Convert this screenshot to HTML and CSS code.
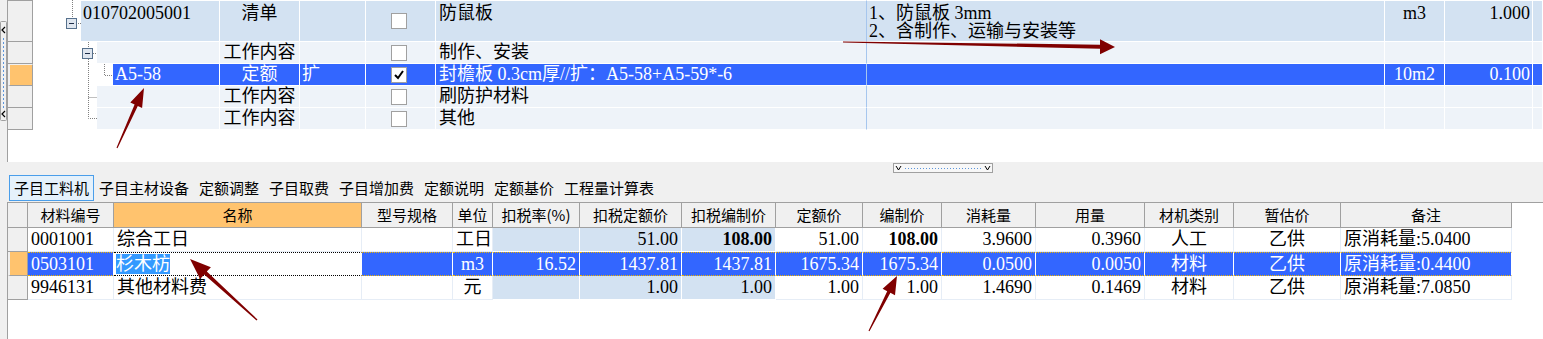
FILE: index.html
```html
<!DOCTYPE html>
<html lang="zh">
<head>
<meta charset="utf-8">
<title>子目工料机</title>
<link rel="stylesheet" href="styles.css">
</head>
<body>
<div class="app">
  <div class="lstrip">
    <svg class="vsplit" width="7" height="100" viewBox="0 0 7 100">
      <rect x="0.5" y="0.5" width="6" height="99" rx="1" fill="#f0f0f0" stroke="#a0a0a0"/>
      <path d="M5 6L2 9L5 12" fill="none" stroke="#000" stroke-width="1.2"/>
      <path d="M3.5 17V87" stroke="#5b95dc" stroke-dasharray="2 2"/>
      <path d="M5 90L2 93L5 96" fill="none" stroke="#000" stroke-width="1.2"/>
    </svg>
  </div>
  <div class="main">
    <div class="top">
      <div class="trow r1">
        <div class="rh"></div>
        <div class="code">
          <svg class="ind" width="48" height="42" viewBox="0 0 48 42">
            <path class="dl" d="M39.5 0V18M45 23.5H48"/>
            <rect x="33.5" y="18.5" width="10" height="10" fill="#dfe6ef" stroke="#56708c"/>
            <path d="M36 23.5H41" stroke="#1c2c48"/>
          </svg>
          <div class="tc grow">010702005001</div>
        </div>
        <div class="tc ctr">清单</div>
        <div class="tc"></div>
        <div class="tc chk"><span class="cb"></span></div>
        <div class="tc desc">防鼠板</div>
        <div class="tc">1、防鼠板 3mm<br>2、含制作、运输与安装等</div>
        <div class="tc ctr">m3</div>
        <div class="tc num">1.000</div>
        <div class="tc"></div>
      </div>
      <div class="trow rl">
        <div class="rh"></div>
        <div class="code">
          <svg class="ind" width="64" height="22" viewBox="0 0 64 22">
            <path class="dl" d="M55.5 0V6M55.5 17V22M60 11.5H64"/>
            <rect x="49.5" y="6.5" width="10" height="10" fill="#dfe6ef" stroke="#56708c"/>
            <path d="M52 11.5H57" stroke="#1c2c48"/>
          </svg>
          <div class="tc grow"></div>
        </div>
        <div class="tc ctr">工作内容</div>
        <div class="tc"></div>
        <div class="tc chk"><span class="cb"></span></div>
        <div class="tc desc">制作、安装</div>
        <div class="tc"></div>
        <div class="tc"></div>
        <div class="tc"></div>
        <div class="tc"></div>
      </div>
      <div class="trow rs">
        <div class="rh on"></div>
        <div class="code">
          <svg class="ind" width="80" height="22" viewBox="0 0 80 22">
            <path class="dl" d="M55.5 0V22M71.5 0V11.5H80"/>
          </svg>
          <div class="tc grow">A5-58</div>
        </div>
        <div class="tc ctr">定额</div>
        <div class="tc">扩</div>
        <div class="tc chk"><span class="cb"><svg width="14" height="14" viewBox="0 0 14 14"><path d="M3 7L6 10L11 3" fill="none" stroke="#000" stroke-width="2"/></svg></span></div>
        <div class="tc desc">封檐板 0.3cm厚//扩：A5-58+A5-59*-6</div>
        <div class="tc"></div>
        <div class="tc ctr">10m2</div>
        <div class="tc num">0.100</div>
        <div class="tc"></div>
      </div>
      <div class="trow rl">
        <div class="rh"></div>
        <div class="code">
          <svg class="ind" width="64" height="22" viewBox="0 0 64 22">
            <path class="dl" d="M55.5 0V22M55.5 11.5H64"/>
          </svg>
          <div class="tc grow"></div>
        </div>
        <div class="tc ctr">工作内容</div>
        <div class="tc"></div>
        <div class="tc chk"><span class="cb"></span></div>
        <div class="tc desc">刷防护材料</div>
        <div class="tc"></div>
        <div class="tc"></div>
        <div class="tc"></div>
        <div class="tc"></div>
      </div>
      <div class="trow rl">
        <div class="rh"></div>
        <div class="code">
          <svg class="ind" width="64" height="22" viewBox="0 0 64 22">
            <path class="dl" d="M55.5 0V10.5H64"/>
          </svg>
          <div class="tc grow"></div>
        </div>
        <div class="tc ctr">工作内容</div>
        <div class="tc"></div>
        <div class="tc chk"><span class="cb"></span></div>
        <div class="tc desc">其他</div>
        <div class="tc"></div>
        <div class="tc"></div>
        <div class="tc"></div>
        <div class="tc"></div>
      </div>
    </div>

    <div class="split">
      <svg class="handle" width="100" height="10" viewBox="0 0 100 10">
        <rect x="0.5" y="0.5" width="99" height="9" fill="#f7f7f7" stroke="#a0a0a0"/>
        <path d="M3 3L5.5 7L8 3M92 3L94.5 7L97 3" fill="none" stroke="#000"/>
        <path d="M12 5.5H88" stroke="#5b95dc" stroke-dasharray="1 2"/>
      </svg>
    </div>

    <div class="tabs">
      <div class="tab on">子目工料机</div>
      <div class="tab">子目主材设备</div>
      <div class="tab">定额调整</div>
      <div class="tab">子目取费</div>
      <div class="tab">子目增加费</div>
      <div class="tab">定额说明</div>
      <div class="tab">定额基价</div>
      <div class="tab">工程量计算表</div>
    </div>

    <div class="low">
      <div class="lrow lhead">
        <div class="hc"></div>
        <div class="hc">材料编号</div>
        <div class="hc hsel">名称</div>
        <div class="hc">型号规格</div>
        <div class="hc">单位</div>
        <div class="hc">扣税率(%)</div>
        <div class="hc">扣税定额价</div>
        <div class="hc">扣税编制价</div>
        <div class="hc">定额价</div>
        <div class="hc">编制价</div>
        <div class="hc">消耗量</div>
        <div class="hc">用量</div>
        <div class="hc">材机类别</div>
        <div class="hc">暂估价</div>
        <div class="hc">备注</div>
      </div>
      <div class="lrow">
        <div class="lrh"></div>
        <div class="lc">0001001</div>
        <div class="lc">综合工日</div>
        <div class="lc"></div>
        <div class="lc c">工日</div>
        <div class="lc lb"></div>
        <div class="lc lb n">51.00</div>
        <div class="lc lb n b">108.00</div>
        <div class="lc n">51.00</div>
        <div class="lc n b">108.00</div>
        <div class="lc n">3.9600</div>
        <div class="lc n">0.3960</div>
        <div class="lc c">人工</div>
        <div class="lc c">乙供</div>
        <div class="lc">原消耗量:5.0400</div>
      </div>
      <div class="lrow sel">
        <div class="lrh on"></div>
        <div class="lc">0503101</div>
        <div class="lc edit"><span class="hl">杉木枋</span></div>
        <div class="lc"></div>
        <div class="lc c">m3</div>
        <div class="lc lb n">16.52</div>
        <div class="lc lb n">1437.81</div>
        <div class="lc lb n">1437.81</div>
        <div class="lc n">1675.34</div>
        <div class="lc n">1675.34</div>
        <div class="lc n">0.0500</div>
        <div class="lc n">0.0050</div>
        <div class="lc c">材料</div>
        <div class="lc c">乙供</div>
        <div class="lc">原消耗量:0.4400</div>
      </div>
      <div class="lrow">
        <div class="lrh"></div>
        <div class="lc">9946131</div>
        <div class="lc">其他材料费</div>
        <div class="lc"></div>
        <div class="lc c">元</div>
        <div class="lc lb"></div>
        <div class="lc lb n">1.00</div>
        <div class="lc lb n">1.00</div>
        <div class="lc n">1.00</div>
        <div class="lc n">1.00</div>
        <div class="lc n">1.4690</div>
        <div class="lc n">0.1469</div>
        <div class="lc c">材料</div>
        <div class="lc c">乙供</div>
        <div class="lc">原消耗量:7.0850</div>
      </div>
    </div>
  </div>
</div>

<svg class="anno" width="1543" height="339" viewBox="0 0 1543 339">
  <polygon points="116.5,147.8 134.6,104.6 130.3,102.6 144,88 142.1,108 137.8,106 117.5,148.2"/>
  <polygon points="843,41.4 1100,44.7 1100,39.2 1115,47 1100,54.2 1100,48.7 843,42.6"/>
  <polygon points="256.5,320.5 204.2,274.6 200.1,279 190,259 210.9,267.2 206.8,271.6 257.5,319.5"/>
  <polygon points="868.5,330.7 887.2,291.2 882.6,288.8 897,276 895,295.2 890.4,292.8 869.5,331.3"/>
</svg>
</body>
</html>
```

FILE: styles.css
```css
html, body {
  margin: 0;
  padding: 0;
}

body {
  width: 1543px;
  height: 339px;
  overflow: hidden;
  background: #f0f0f0;
  position: relative;
  color: #000;
  font-family: "Liberation Serif", "Noto Sans CJK SC", serif;
  font-size: 18px;
}

.app {
  display: flex;
  height: 339px;
}

.lstrip {
  width: 7px;
  flex: none;
  padding-top: 21px;
  box-sizing: border-box;
  background: #f0f0f0;
}

.vsplit {
  display: block;
}

.main {
  flex: 1;
  min-width: 0;
  display: flex;
  flex-direction: column;
}

/* ---------- top tree grid ---------- */
.top {
  height: 162px;
  flex: none;
  background: #fff;
  border-left: 1px solid #a0a0a0;
  box-sizing: border-box;
}

.trow {
  display: grid;
  grid-template-columns: 25px 187px 80px 66px 70px 431px 518px 60px 88px 1fr;
  height: 22px;
}

.trow.r1 {
  height: 42px;
}

.rh {
  background: #f0f0f0;
  border-right: 1px solid #a0a0a0;
  border-bottom: 1px solid #a0a0a0;
  box-sizing: border-box;
}

.r1 .rh {
  border-top: 1px solid #a0a0a0;
}

.rh.on {
  background: #ffc36e;
  border-left: 2px solid #f0f0f0;
  border-top: 1px solid #f0f0f0;
}

.code {
  display: flex;
  min-width: 0;
}

.ind {
  flex: none;
  display: block;
}

.dl {
  fill: none;
  stroke: #808080;
  stroke-dasharray: 1 1;
}

.tc {
  box-sizing: border-box;
  border-right: 1px solid #fff;
  border-bottom: 1px solid #fff;
  padding: 0 2px;
  line-height: 21px;
  white-space: nowrap;
  overflow: hidden;
  min-width: 0;
}

.grow {
  flex: 1;
}

.r1 .tc {
  background: #d3e2f2;
  border-top: 1px solid #fff;
  line-height: 18px;
  padding-top: 3px;
}

.rl .tc {
  background: #eef3f9;
}

.rs .tc {
  background: #3366ff;
  color: #fff;
}

.tc.desc {
  padding-left: 3px;
  border-right-color: #a6c6ee;
}

.ctr {
  text-align: center;
}

.num {
  text-align: right;
}

.tc.chk {
  display: flex;
  align-items: center;
  justify-content: center;
  padding: 0 4px 0 0;
}

.r1 .tc.chk {
  padding-top: 0;
}

.cb {
  width: 16px;
  height: 16px;
  box-sizing: border-box;
  border: 1px solid #a0a0a0;
  background: #fff;
  display: flex;
  align-items: center;
  justify-content: center;
}

.cb svg {
  display: block;
}

/* ---------- splitter / tabs ---------- */
.split {
  height: 13px;
  flex: none;
}

.handle {
  display: block;
  margin: 1px 0 0 886px;
}

.tabs {
  display: flex;
  height: 26px;
  flex: none;
  padding-left: 2px;
  margin-bottom: 1px;
}

.tab {
  box-sizing: border-box;
  height: 26px;
  padding: 0 4px;
  border: 1px solid transparent;
  font-family: "Noto Sans CJK SC", sans-serif;
  font-size: 15px;
  line-height: 24px;
  white-space: nowrap;
}

.tab.on {
  border-color: #4a9eea;
  background: #e5f1fb;
}

/* ---------- lower grid ---------- */
.low {
  flex: 1;
  background: #fff;
  border-left: 1px solid #a0a0a0;
  border-top: 1px solid #a0a0a0;
}

.lrow {
  display: grid;
  grid-template-columns: 20px 86px 248px 91px 40px 87px 102px 94px 87px 79px 94px 109px 89px 107px 171px;
  height: 24px;
}

.lrow.lhead {
  height: 25px;
}

.hc {
  box-sizing: border-box;
  background: #f0f0f0;
  border-right: 1px solid #a0a0a0;
  border-bottom: 1px solid #a0a0a0;
  font-family: "Noto Sans CJK SC", sans-serif;
  font-size: 15px;
  line-height: 24px;
  text-align: center;
  white-space: nowrap;
  overflow: hidden;
}

.hc.hsel {
  background: #ffc36e;
}

.lrh {
  box-sizing: border-box;
  background: #f0f0f0;
  border-right: 1px solid #a0a0a0;
  border-bottom: 1px solid #a0a0a0;
}

.lrh.on {
  background: #ffc36e;
  border-left: 2px solid #f0f0f0;
}

.lc {
  box-sizing: border-box;
  border-right: 1px solid #e6edf6;
  border-bottom: 1px solid #e6edf6;
  padding: 0 3px;
  line-height: 23px;
  white-space: nowrap;
  overflow: hidden;
}

.lc.lb {
  background: #d3e2f2;
  border-right-color: #fff;
  border-bottom-color: #fff;
}

.n {
  text-align: right;
}

.c {
  text-align: center;
}

.b {
  font-weight: bold;
}

.sel .lc {
  background: #3366ff;
  color: #fff;
  border-right-color: #fff;
  border-top: 1px dotted #f0b400;
  border-bottom: 1px dotted #f0b400;
  line-height: 22px;
}

.sel .lc.edit {
  background: #fff;
  border-top-color: #000;
  border-bottom-color: #000;
  padding-left: 2px;
}

.hl {
  background: #3399ff;
  color: #fff;
}

/* ---------- annotation arrows ---------- */
.anno {
  position: absolute;
  left: 0;
  top: 0;
  pointer-events: none;
}

.anno polygon {
  fill: #800000;
}
```
